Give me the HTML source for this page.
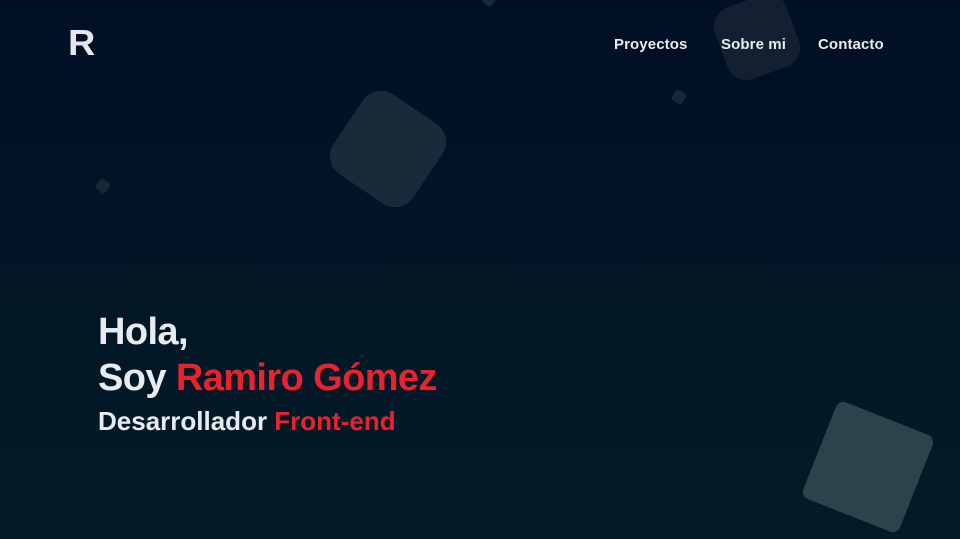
<!DOCTYPE html>
<html><head><meta charset="utf-8"><style>
*{margin:0;padding:0;box-sizing:border-box}
body{width:960px;height:539px;overflow:hidden;background:linear-gradient(180deg,#010f24 0%,#021726 60%,#031b27 100%);font-family:"Liberation Sans",sans-serif;font-weight:bold;position:relative}
.sq{position:absolute}
.nav{position:absolute;top:36px;font-size:15px;color:#e8ebef;letter-spacing:0.1px}
.logo{position:absolute;left:68px;top:25px;font-size:36px;color:#e3e6ea;line-height:36px;font-weight:900;transform:scaleX(1.05);transform-origin:left}
h1{position:absolute;left:98px;font-size:38px;color:#e8ebef;letter-spacing:-0.6px;line-height:46px;top:309px;font-weight:bold}
.r{color:#e8222f}
h2{position:absolute;left:98px;top:406px;font-size:26px;color:#e8ebef;letter-spacing:0px;font-weight:bold}
</style></head><body>
<div class="sq" style="left:719px;top:-1px;width:76px;height:76px;background:#132032;border-radius:20px;transform:rotate(-20deg)"></div>
<div class="sq" style="left:340px;top:101px;width:96px;height:96px;background:#1a2a3a;border-radius:22px;transform:rotate(34deg)"></div>
<div class="sq" style="left:816px;top:415px;width:104px;height:104px;background:#2d434c;border-radius:8px;transform:rotate(21.6deg)"></div>
<div class="sq" style="left:673px;top:91px;width:12px;height:12px;background:#1a2736;border-radius:3px;transform:rotate(30deg)"></div>
<div class="sq" style="left:97px;top:180px;width:12px;height:12px;background:#1a2736;border-radius:3px;transform:rotate(40deg)"></div>
<div class="sq" style="left:483px;top:-7px;width:12px;height:12px;background:#1a2736;border-radius:3px;transform:rotate(40deg)"></div>
<div class="logo">R</div>
<div class="nav" style="left:614px">Proyectos</div>
<div class="nav" style="left:721px">Sobre mi</div>
<div class="nav" style="left:818px">Contacto</div>
<h1>Hola,<br>Soy <span class="r">Ramiro Gómez</span></h1>
<h2>Desarrollador <span class="r">Front-end</span></h2>
</body></html>
